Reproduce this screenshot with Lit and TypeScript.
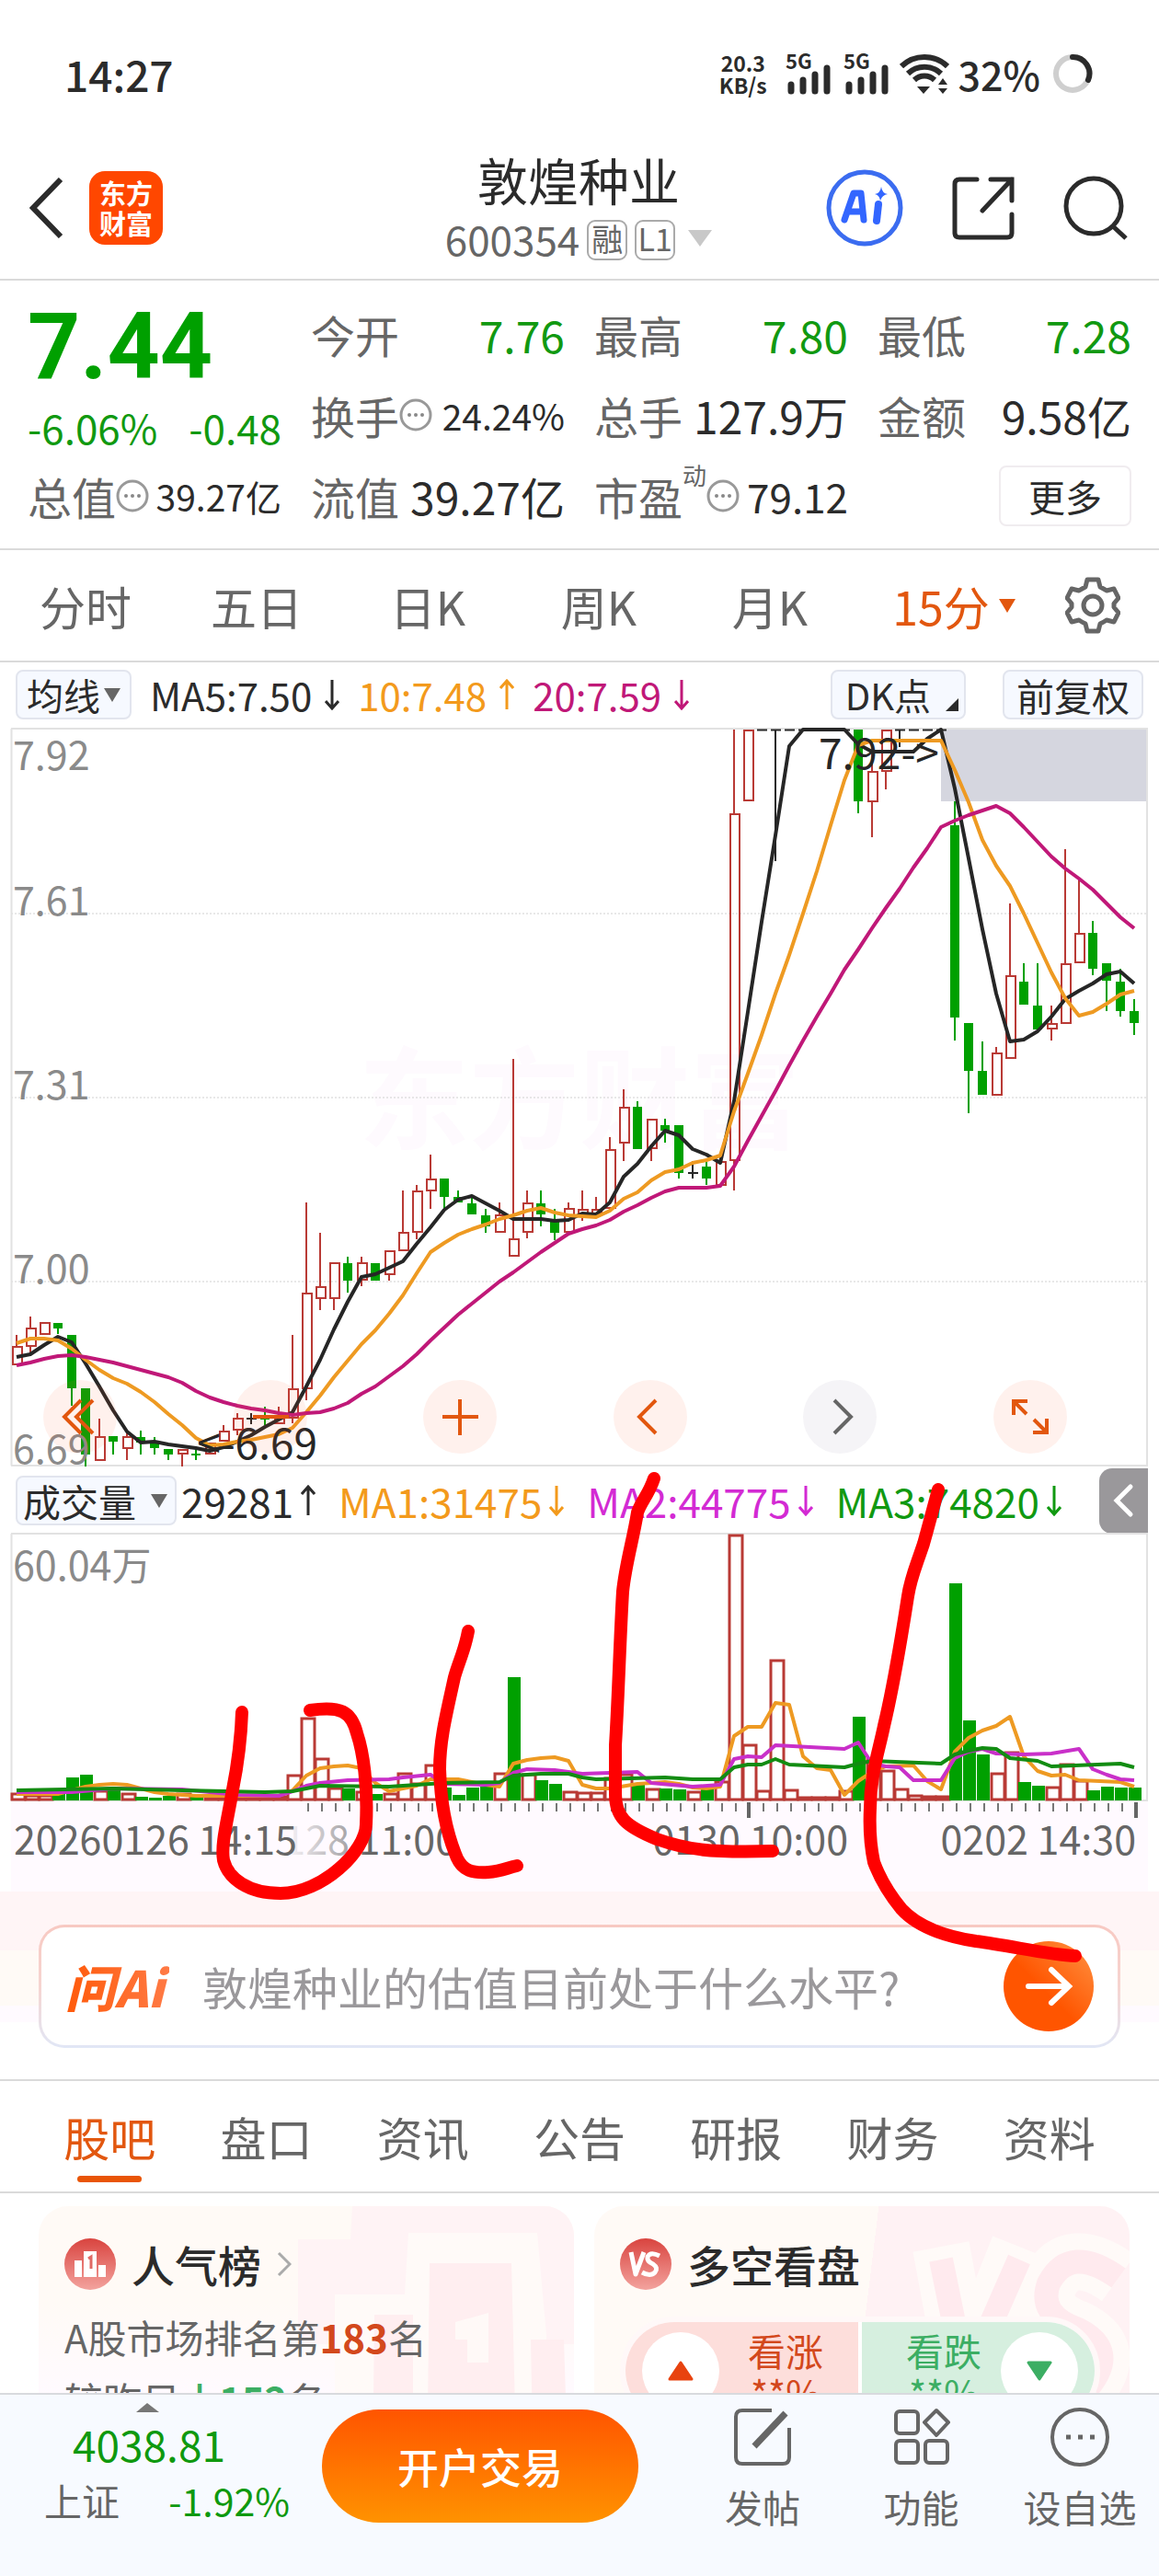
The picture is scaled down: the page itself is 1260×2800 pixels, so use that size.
import { LitElement, html, css, svg } from "lit";
import { customElement, property, state } from "lit/decorators.js";
import { classMap } from "lit/directives/class-map.js";

type Kind = "r" | "g" | "k";
/** high, body top, body bottom, low, kind */
type Candle = [number, number, number, number, Kind];
type Point = [number, number];

const X0 = 18;
const STEP = 15;
const cx = (i: number) => X0 + i * STEP;

const CANDLES: Candle[] = [
  [1451, 1463, 1484, 1484, "r"], [1431, 1443, 1464, 1470, "r"], [1437, 1437, 1451, 1451, "r"],
  [1438, 1438, 1444, 1450, "g"], [1451, 1451, 1509, 1528, "g"], [1509, 1509, 1581, 1594, "g"],
  [1542, 1561, 1588, 1588, "r"], [1561, 1561, 1567, 1581, "g"], [1556, 1561, 1575, 1587, "r"],
  [1555, 1562, 1568, 1581, "g"], [1562, 1568, 1574, 1581, "g"], [1575, 1575, 1581, 1587, "g"],
  [1575, 1575, 1581, 1594, "r"], [1573, 1580, 1582, 1587, "g"], [1568, 1568, 1581, 1581, "r"],
  [1549, 1555, 1567, 1567, "r"], [1536, 1541, 1555, 1560, "r"], [1536, 1541, 1543, 1548, "k"],
  [1529, 1539, 1543, 1549, "g"], [1529, 1540, 1548, 1548, "r"], [1451, 1509, 1542, 1547, "r"],
  [1307, 1405, 1510, 1522, "r"], [1340, 1398, 1412, 1424, "r"], [1372, 1372, 1412, 1424, "r"],
  [1366, 1373, 1392, 1405, "g"], [1366, 1372, 1392, 1398, "r"], [1373, 1373, 1392, 1392, "g"],
  [1359, 1359, 1386, 1392, "r"], [1294, 1339, 1360, 1360, "r"], [1288, 1294, 1340, 1347, "r"],
  [1255, 1281, 1295, 1314, "r"], [1281, 1281, 1301, 1314, "g"], [1294, 1301, 1307, 1307, "g"],
  [1302, 1308, 1320, 1320, "g"], [1314, 1321, 1333, 1340, "g"], [1307, 1320, 1340, 1340, "r"],
  [1151, 1346, 1366, 1366, "r"], [1294, 1307, 1340, 1346, "r"], [1294, 1308, 1320, 1333, "g"],
  [1314, 1327, 1340, 1348, "g"], [1307, 1313, 1340, 1340, "r"], [1294, 1314, 1320, 1327, "r"],
  [1301, 1314, 1320, 1320, "r"], [1236, 1249, 1314, 1314, "r"], [1184, 1203, 1243, 1262, "r"],
  [1197, 1203, 1249, 1249, "g"], [1216, 1216, 1249, 1262, "r"], [1216, 1223, 1229, 1242, "g"],
  [1223, 1223, 1275, 1281, "g"], [1262, 1274, 1276, 1281, "k"], [1262, 1268, 1281, 1288, "g"],
  [1262, 1262, 1289, 1289, "r"], [793, 884, 1262, 1294, "r"], [793, 793, 871, 871, "r"],
  [793, 793, 794, 794, "k"], [793, 793, 794, 936, "k"], [793, 793, 794, 794, "k"],
  [793, 793, 794, 794, "k"], [793, 793, 794, 794, "k"], [793, 793, 794, 794, "k"],
  [793, 793, 794, 794, "k"], [793, 793, 871, 884, "g"], [807, 838, 872, 910, "r"],
  [793, 793, 839, 858, "r"], [793, 793, 794, 812, "k"], [793, 793, 794, 794, "k"],
  [793, 793, 794, 794, "k"], [793, 793, 794, 794, "k"], [871, 897, 1106, 1131, "g"],
  [1112, 1112, 1164, 1210, "g"], [1132, 1164, 1190, 1190, "g"], [1138, 1144, 1191, 1191, "r"],
  [982, 1060, 1151, 1151, "r"], [1047, 1067, 1092, 1092, "g"], [1047, 1093, 1119, 1119, "g"],
  [1093, 1112, 1119, 1131, "r"], [923, 1047, 1113, 1113, "r"], [955, 1014, 1047, 1047, "r"],
  [1001, 1014, 1053, 1060, "g"], [1047, 1047, 1066, 1099, "g"], [1053, 1067, 1099, 1105, "g"],
  [1086, 1099, 1112, 1125, "g"],
];

const MA5 = [
  1475, 1472, 1462, 1453, 1459, 1482, 1507, 1533, 1556, 1568, 1567, 1570, 1572, 1574, 1577, 1573, 1567, 1560,
  1551, 1543, 1535, 1507, 1478, 1445, 1415, 1388, 1385, 1378, 1371, 1352, 1334, 1315, 1304, 1300, 1308, 1316,
  1325, 1325, 1325, 1327, 1326, 1319, 1320, 1307, 1279, 1265, 1246, 1229, 1234, 1249, 1255, 1264, 1197, 1100,
  1002, 908, 811, 793, 793, 793, 793, 809, 817, 817, 817, 817, 803, 793, 857, 933, 1010, 1080,
  1132, 1130, 1121, 1105, 1086, 1077, 1069, 1059, 1056, 1069,
];
const MA10 = [
  1460, 1455, 1455, 1457, 1466, 1478, 1489, 1498, 1504, 1513, 1524, 1537, 1549, 1563, 1571, 1570, 1567, 1565,
  1562, 1559, 1552, 1535, 1517, 1497, 1479, 1461, 1446, 1428, 1408, 1384, 1361, 1351, 1342, 1336, 1331, 1325,
  1321, 1316, 1313, 1318, 1321, 1322, 1323, 1316, 1303, 1296, 1283, 1274, 1271, 1264, 1261, 1256, 1208, 1167,
  1125, 1080, 1038, 993, 947, 897, 848, 810, 805, 805, 805, 805, 805, 805, 837, 872, 913, 941,
  963, 993, 1025, 1057, 1085, 1104, 1100, 1091, 1081, 1077,
];
const MA20 = [
  1484, 1481, 1477, 1474, 1473, 1475, 1478, 1481, 1485, 1489, 1493, 1497, 1503, 1512, 1519, 1524, 1528, 1531,
  1533, 1536, 1538, 1536, 1535, 1531, 1525, 1515, 1507, 1496, 1485, 1472, 1457, 1443, 1429, 1417, 1405, 1393,
  1383, 1372, 1361, 1351, 1341, 1336, 1332, 1326, 1317, 1310, 1302, 1295, 1291, 1291, 1291, 1289, 1268, 1240,
  1213, 1186, 1158, 1131, 1105, 1080, 1054, 1032, 1009, 987, 966, 943, 922, 899, 892, 886, 881, 876,
  884, 899, 915, 931, 944, 955, 967, 982, 997, 1009,
];

const VOLUME =
  "r1949 r1951 r1951 g1950 g1932 g1929 r1946 g1946 r1949 g1953 g1954 g1952 r1949 g1951 r1953 r1953 r1953 r1952 " +
  "r1953 r1952 r1929 r1867 r1911 r1943 g1944 r1947 g1950 r1949 r1927 r1938 r1918 g1943 g1951 g1943 g1942 r1927 " +
  "g1823 r1928 g1935 g1939 r1947 r1948 r1948 r1932 r1928 g1940 r1944 g1944 g1945 r1947 g1941 r1936 r1668 r1896 " +
  "r1946 r1804 r1945 r1953 r1953 r1953 r1946 g1866 r1911 r1924 r1944 r1951 r1952 r1952 g1721 g1870 g1907 r1927 " +
  "r1904 g1937 g1941 r1942 r1917 r1935 g1946 g1942 g1943 g1943";

const VMA1: Point[] = [
  [0, 1950], [3, 1950], [4, 1946], [5, 1942], [6, 1940], [7, 1939], [8, 1940], [9, 1944], [10, 1948], [11, 1950],
  [13, 1952], [19, 1952], [20, 1946], [21, 1930], [22, 1922], [23, 1920], [24, 1919], [25, 1922], [26, 1938],
  [27, 1947], [28, 1944], [29, 1941], [30, 1934], [32, 1934], [33, 1937], [34, 1940], [35, 1942], [36, 1917],
  [37, 1913], [38, 1911], [39, 1910], [40, 1914], [41, 1940], [42, 1944], [43, 1944], [45, 1939], [47, 1937],
  [48, 1939], [49, 1943], [50, 1944], [51, 1942], [52, 1887], [53, 1877], [54, 1877], [55, 1851], [56, 1853],
  [57, 1909], [58, 1922], [59, 1924], [60, 1951], [61, 1936], [62, 1926], [63, 1920], [65, 1919], [66, 1936],
  [67, 1945], [68, 1904], [69, 1889], [70, 1881], [71, 1876], [72, 1866], [73, 1909], [74, 1925], [75, 1930],
  [76, 1929], [77, 1935], [80, 1937], [81, 1942],
];
const VMA2: Point[] = [
  [0, 1948], [4, 1948], [7, 1944], [12, 1945], [14, 1948], [16, 1951], [19, 1952], [20, 1947], [21, 1941],
  [22, 1938], [24, 1935], [27, 1934], [28, 1932], [30, 1929], [31, 1939], [34, 1940], [35, 1938], [36, 1927],
  [37, 1923], [39, 1924], [41, 1928], [45, 1926], [46, 1938], [49, 1942], [51, 1940], [52, 1912], [53, 1909],
  [54, 1910], [55, 1897], [60, 1901], [61, 1894], [62, 1917], [63, 1920], [64, 1921], [65, 1935], [67, 1935],
  [68, 1911], [69, 1904], [70, 1901], [71, 1906], [73, 1907], [75, 1906], [77, 1901], [78, 1923], [79, 1929],
  [80, 1934], [81, 1935],
];
const VMA3: Point[] = [
  [0, 1946], [7, 1944], [12, 1946], [18, 1948], [20, 1947], [22, 1941], [27, 1942], [31, 1938], [35, 1937],
  [36, 1930], [38, 1928], [40, 1928], [41, 1932], [42, 1934], [47, 1932], [49, 1934], [51, 1934], [52, 1921],
  [53, 1918], [54, 1918], [55, 1912], [56, 1918], [60, 1921], [61, 1917], [62, 1914], [67, 1917], [68, 1907],
  [69, 1903], [70, 1900], [71, 1901], [72, 1911], [74, 1914], [75, 1920], [80, 1917], [81, 1921],
];

const line = (ys: number[]) => ys.map((y, i) => `${cx(i)},${y}`).join(" ");
const sparse = (ps: Point[]) => ps.map(([i, y]) => `${cx(i)},${y}`).join(" ");

const FONT = css`"Noto Sans CJK SC", "Noto Sans", sans-serif`;

const base = css`
  :host {
    display: block;
    font-family: ${FONT};
    color: #2b2b2b;
  }
  * {
    box-sizing: border-box;
  }
  svg {
    display: block;
    flex: none;
  }
  button,
  input {
    font: inherit;
    color: inherit;
    background: none;
    border: 0;
    padding: 0;
    margin: 0;
  }
  button {
    cursor: pointer;
  }
`;

@customElement("price-chart")
export class PriceChart extends LitElement {
  static styles = [
    base,
    css`
      :host {
        position: relative;
      }
      .plot {
        width: 100%;
        height: auto;
      }
      .axis {
        fill: #8a8a8a;
        font-size: 43px;
      }
      .mark {
        fill: #262626;
        font-size: 46px;
      }
      .watermark {
        fill: #fefafe;
        font-size: 120px;
        font-weight: 700;
      }
      .tools {
        position: absolute;
        left: 0;
        right: 0;
        bottom: 16px;
        padding: 0 100px 0 47px;
        display: flex;
        justify-content: space-between;
      }
      .tool {
        width: 80px;
        height: 80px;
        border-radius: 50%;
        background: rgba(255, 100, 50, 0.09);
      }
      .tool.off {
        background: rgba(90, 60, 120, 0.06);
      }
      .tool svg {
        fill: none;
        stroke: #e2570f;
        stroke-width: 4;
      }
      .tool.off svg {
        stroke: #666;
      }
    `,
  ];

  private candle([hi, top, bottom, lo, kind]: Candle, i: number) {
    const x = cx(i);
    if (kind === "k") {
      return svg`<path d="M${x} ${hi}V${lo}M${x - 5} ${(top + bottom) / 2}h11" stroke="#262626" stroke-width="2"/>`;
    }
    if (kind === "g") {
      return svg`<path d="M${x} ${hi}V${lo}" stroke="#00a000" stroke-width="2"/>
        <rect x=${x - 5} y=${top} width="10" height=${bottom - top} fill="#00a000"/>`;
    }
    return svg`<path d="M${x} ${hi}V${top}M${x} ${bottom}V${lo}" stroke="#b93a35" stroke-width="2"/>
      <rect x=${x - 4} y=${top + 1} width="10" height=${Math.max(bottom - top - 2, 2)} fill="none" stroke="#b93a35" stroke-width="2"/>`;
  }

  render() {
    return html`
      <svg class="plot" viewBox="0 790 1260 806" role="img" aria-label="15分K线">
        <text class="watermark" x="390" y="1240">东方财富</text>
        <rect x="1023" y="793" width="224" height="78" fill="#d5d6df" />
        <path d="M12 993H1247M12 1193H1247M12 1393H1247" stroke="#d0d0d0" stroke-width="1" stroke-dasharray="2 2" />
        <path d="M12.500 792V1593M12 792H1248M12 1593H1248M1247 792V1593" fill="none" stroke="#e2e2e2" stroke-width="2" />
        ${[["7.92", 837], ["7.61", 995], ["7.31", 1195], ["7.00", 1395]].map(
          ([t, y]) => svg`<text class="axis" x="14" y=${y}>${t}</text>`
        )}
        ${CANDLES.map((c, i) => this.candle(c, i))}
        <g fill="none" stroke-width="4" stroke-linejoin="round">
          <polyline points=${line(MA5)} stroke="#262626" />
          <polyline points=${line(MA10)} stroke="#ee9a22" />
          <polyline points=${line(MA20)} stroke="#c01878" />
        </g>
        <text class="axis" x="14" y="1591">6.69</text>
        <text class="mark" x="890" y="836">7.92-&gt;</text>
        <text class="mark" x="345" y="1586" text-anchor="end">&lt;-6.69</text>
      </svg>
      <div class="tools">
        <button class="tool" aria-label="最左">
          <svg viewBox="0 0 80 80"><path d="M41 22L23 40L41 58M54 22L36 40L54 58" /></svg>
        </button>
        <button class="tool" aria-label="缩小">
          <svg viewBox="0 0 80 80"><path d="M21 40H60" /></svg>
        </button>
        <button class="tool" aria-label="放大">
          <svg viewBox="0 0 80 80"><path d="M21 40H60M40 21V60" /></svg>
        </button>
        <button class="tool" aria-label="左移">
          <svg viewBox="0 0 80 80"><path d="M46 22L28 40L46 58" /></svg>
        </button>
        <button class="tool off" aria-label="右移">
          <svg viewBox="0 0 80 80"><path d="M34 22L52 40L34 58" /></svg>
        </button>
        <button class="tool" aria-label="全屏">
          <svg viewBox="0 0 80 80">
            <path d="M22 38V23H37M23 24L36 37M58 42V57H43M57 56L44 43" />
          </svg>
        </button>
      </div>
    `;
  }
}

@customElement("volume-chart")
export class VolumeChart extends LitElement {
  static styles = [
    base,
    css`
      .plot {
        width: 100%;
        height: auto;
      }
      .axis {
        fill: #8a8a8a;
        font-size: 43px;
      }
      .date {
        fill: #666;
        font-size: 43px;
      }
      .faded {
        fill: url(#fade);
      }
    `,
  ];

  render() {
    const ticks = Array.from({ length: 60 }, (_, i) => 335 + i * 15).filter((x) => x !== 815 && x < 1230);
    return html`
      <svg class="plot" viewBox="0 1666 1260 390" role="img" aria-label="成交量">
        <defs>
          <linearGradient id="fade" gradientUnits="userSpaceOnUse" x1="316" x2="398" y1="0" y2="0">
            <stop offset="0" stop-color="#666" stop-opacity="0" />
            <stop offset="0.04" stop-color="#666" stop-opacity="0.1" />
            <stop offset="0.8" stop-color="#666" stop-opacity="0.6" />
            <stop offset="1" stop-color="#666" />
          </linearGradient>
        </defs>
        <rect x="12" y="1958" width="1236" height="98" fill="#fffaff" />
        <path d="M12 1667H1248M12 1957H1248M12.500 1667V1957M1247 1667V1957" stroke="#e2e2e2" stroke-width="2" />
        <text class="axis" x="14" y="1718">60.04万</text>
        ${VOLUME.split(" ").map((v, i) => {
          const y = Number(v.slice(1));
          const x = cx(i) - 6;
          return v[0] === "g"
            ? svg`<rect x=${x} y=${y} width="14" height=${1957 - y} fill="#00a000"/>`
            : svg`<rect x=${x + 1} y=${y + 1} width="14" height=${1955 - y} fill="#fff" stroke="#b93a35" stroke-width="3"/>`;
        })}
        <g fill="none" stroke-width="4" stroke-linejoin="round">
          <polyline points=${sparse(VMA1)} stroke="#ee9a22" />
          <polyline points=${sparse(VMA2)} stroke="#c930c9" />
          <polyline points=${sparse(VMA3)} stroke="#128c12" />
        </g>
        <path d=${ticks.map((x) => `M${x} 1960v9`).join("")} stroke="#777" stroke-width="2" />
        <path d="M814 1959V1976M1235 1959V1976" stroke="#666" stroke-width="4" />
        <text class="date" x="15" y="2016">20260126 14:15</text>
        <text class="date faded" x="497" y="2016" text-anchor="end">0128 11:00</text>
        <text class="date" x="922" y="2016" text-anchor="end">0130 10:00</text>
        <text class="date" x="1235" y="2016" text-anchor="end">0202 14:30</text>
      </svg>
    `;
  }
}

const arrow = (dir: "up" | "down") => html`
  <svg class="arrow" width="16" height="34" viewBox="0 0 16 34" fill="none" stroke="currentColor" stroke-width="3">
    <path d=${dir === "down" ? "M8 1V32M1 24L8 32L15 24" : "M8 33V2M1 10L8 2L15 10"} />
  </svg>
`;

const dots = () => html`
  <svg class="dots" width="36" height="36" viewBox="0 0 36 36" aria-hidden="true">
    <circle cx="18" cy="18" r="16" fill="none" stroke="#999" stroke-width="3" />
    <circle cx="11" cy="18" r="2" fill="#888" /><circle cx="18" cy="18" r="2" fill="#888" />
    <circle cx="25" cy="18" r="2" fill="#888" />
  </svg>
`;

@customElement("app-root")
export class AppRoot extends LitElement {
  @property() name = "敦煌种业";
  @state() private period = "15分";
  @state() private section = "股吧";

  static styles = [
    base,
    css`
      .page {
        height: 100vh;
        display: flex;
        flex-direction: column;
        background: #fff;
        overflow: hidden;
      }
      .page > * {
        flex: none;
      }

      .status {
        height: 140px;
        padding: 20px 71px 0 70px;
        display: flex;
        align-items: center;
        font-size: 46px;
        font-weight: 500;
      }
      .clock {
        margin-right: auto;
      }
      .rate {
        font-size: 23px;
        line-height: 24px;
        font-weight: 700;
        text-align: center;
        margin-right: 18px;
      }
      .radio {
        font-size: 22px;
        font-weight: 700;
      }
      .battery {
        font-size: 43px;
        margin: 0 12px 0 10px;
      }

      .header {
        height: 165px;
        padding: 9px 34px 0 32px;
        display: grid;
        grid-template-columns: 1fr auto 1fr;
        align-items: center;
        border-bottom: 2px solid #dadada;
      }
      .left,
      .right {
        display: flex;
        align-items: center;
        gap: 28px;
      }
      .right {
        justify-content: flex-end;
        gap: 53px;
      }
      .logo {
        width: 80px;
        height: 80px;
        border-radius: 17px;
        background: #ff4700;
        color: #fff;
        font-size: 29px;
        line-height: 33px;
        font-weight: 700;
        display: grid;
        place-content: center;
        text-align: center;
        text-decoration: none;
      }
      .name {
        margin: 0;
        font-size: 55px;
        line-height: 66px;
        font-weight: 400;
        text-align: center;
      }
      .code {
        display: flex;
        align-items: center;
        justify-content: center;
        gap: 8px;
        height: 64px;
        font-size: 44px;
        line-height: 54px;
        color: #666;
      }
      .tag {
        width: 44px;
        height: 44px;
        border: 2px solid #aaa;
        border-radius: 9px;
        font-size: 34px;
        line-height: 36px;
        text-align: center;
        margin-top: 4px;
      }
      .code svg {
        margin-left: 6px;
      }

      .quote {
        display: grid;
        grid-template-columns: repeat(4, 1fr);
        grid-template-rows: repeat(3, 88px);
        column-gap: 32px;
        padding: 14px 30px 13px;
        border-bottom: 2px solid #dadada;
      }
      .headline {
        grid-row: span 2;
        color: #00a000;
      }
      .price {
        font-family: Roboto, "Noto Sans", sans-serif;
        font-size: 100px;
        line-height: 116px;
        font-weight: 700;
      }
      .change {
        display: flex;
        justify-content: space-between;
        font-size: 44px;
        line-height: 58px;
        color: #119911;
      }
      .item {
        display: flex;
        align-items: center;
        font-size: 48px;
        line-height: 80px;
        white-space: nowrap;
      }
      .item .label {
        color: #666;
      }
      .item .value {
        margin-left: auto;
      }
      .item .green {
        color: #119911;
      }
      .item .small {
        font-size: 39px;
      }
      .item .medium {
        font-size: 44px;
      }
      .sup {
        font-size: 26px;
        line-height: 30px;
        color: #666;
        align-self: flex-start;
        margin-top: 6px;
      }
      .more {
        justify-self: end;
        align-self: center;
        width: 144px;
        height: 66px;
        border: 2px solid #f0ecef;
        border-radius: 8px;
        font-size: 40px;
        line-height: 58px;
      }

      .periods {
        display: grid;
        grid-template-columns: repeat(5, 186fr) 214fr 88fr 28fr;
        height: 122px;
        align-items: center;
        border-bottom: 2px solid #dadada;
        font-size: 50px;
        line-height: 80px;
        color: #666;
      }
      .period {
        display: flex;
        align-items: center;
        justify-content: center;
        gap: 10px;
      }
      .on {
        color: #e2570f;
      }
      .gear {
        display: grid;
        place-items: center;
      }

      .board {
        position: relative;
      }
      .ink {
        position: absolute;
        inset: 0 0 auto 0;
        width: 100%;
        height: auto;
        pointer-events: none;
      }
      .legend {
        display: flex;
        align-items: center;
        height: 70px;
        padding: 0 17px;
        font-size: 42px;
        line-height: 60px;
        gap: 20px;
        white-space: nowrap;
      }
      .legend.volume {
        font-size: 44px;
        gap: 25px;
        padding-right: 12px;
      }
      .series {
        display: flex;
        align-items: center;
        gap: 14px;
      }
      .volume .series {
        gap: 8px;
      }
      .volume .chip + .series {
        margin-left: -20px;
      }
      .ma10 {
        color: #f39a1c;
      }
      .ma20 {
        color: #c01878;
      }
      .purple {
        color: #d32ad3;
      }
      .green {
        color: #119911;
      }
      .chip {
        position: relative;
        height: 54px;
        padding: 0 10px;
        border: 2px solid #e2e5ee;
        border-radius: 8px;
        background: #f6f9ff;
        font-size: 40px;
        line-height: 48px;
        display: flex;
        align-items: center;
        gap: 4px;
      }
      .chip.wide {
        font-size: 41px;
        padding: 0 8px 0 6px;
        gap: 16px;
      }
      .chip.push {
        margin-left: auto;
        padding: 0 32px 0 14px;
      }
      .chip.gap {
        font-size: 41px;
        padding: 0 13px;
        margin-left: 20px;
      }
      .corner {
        position: absolute;
        right: 6px;
        bottom: 7px;
      }
      .collapse {
        margin-left: auto;
        width: 53px;
        height: 71px;
        background: #9a989b;
        border-radius: 14px 0 0 14px;
        display: grid;
        place-items: center;
      }

      .ask {
        padding: 36px 42px 34px;
        border-bottom: 2px solid #dadada;
        background: linear-gradient(#fff5f6 0 64px, #fffaf6 64px 124px, #fffaff 124px 142px, #fff 142px);
      }
      .askbox {
        height: 134px;
        border: 3px solid transparent;
        border-radius: 28px;
        background: linear-gradient(#fff, #fff) padding-box, linear-gradient(#f8c9c2, #f6d4d0 50%, #e1e7f6) border-box;
        display: flex;
        align-items: center;
        padding: 0 26px;
        gap: 36px;
      }
      .brand {
        font-size: 54px;
        font-style: italic;
        font-weight: 900;
        line-height: 80px;
        background: linear-gradient(90deg, #ff5a0a, #ff7a45);
        background-clip: text;
        -webkit-background-clip: text;
        color: transparent;
        padding-right: 6px;
      }
      .question {
        flex: 1;
        min-width: 0;
        font-size: 49px;
        line-height: 80px;
        height: 80px;
        outline: 0;
      }
      .question::placeholder {
        color: #9a989b;
        opacity: 1;
      }
      .send {
        width: 98px;
        height: 98px;
        border-radius: 50%;
        background: linear-gradient(45deg, #ff5500 45%, #ff9444);
      }

      .sections {
        display: grid;
        grid-template-columns: repeat(7, 1fr);
        padding: 0 34px;
        height: 122px;
        border-bottom: 2px solid #dadada;
        font-size: 50px;
        line-height: 80px;
        color: #666;
      }
      .section {
        position: relative;
      }
      .section.on {
        color: #e2570f;
      }
      .section.on::after {
        content: "";
        position: absolute;
        left: 50%;
        bottom: 10px;
        width: 70px;
        height: 7px;
        margin-left: -35px;
        border-radius: 4px;
        background: #e95506;
      }

      .page > .cards {
        flex: 1 1 0;
        min-height: 0;
        overflow: hidden;
        display: grid;
        grid-template-columns: 1fr 1fr;
        gap: 22px;
        padding: 14px 32px 0 42px;
      }
      .card {
        position: relative;
        height: 300px;
        border-radius: 32px;
        padding: 26px 28px;
        overflow: hidden;
        background: linear-gradient(#fffaf6 35%, #fffaff 70%);
      }
      .card.versus {
        background: linear-gradient(97deg, #fffaf6 50%, #fff2f4 50%);
      }
      .ghost {
        position: absolute;
        right: 0;
        top: 0;
      }
      .title {
        position: relative;
        margin: 0;
        height: 74px;
        display: flex;
        align-items: center;
        gap: 17px;
        font-size: 47px;
        line-height: 60px;
        font-weight: 500;
      }
      .rank {
        position: relative;
        margin: 0;
        font-size: 42px;
        line-height: 68px;
        color: #666;
      }
      .ranks {
        padding-top: 8px;
      }
      .up {
        color: #d3481c;
        font-weight: 700;
      }
      .down {
        color: #3cae63;
        font-weight: 700;
      }
      .vote {
        position: relative;
        margin: 20px 4px 0 0;
        height: 118px;
        border: 6px solid #fff8f8;
        border-radius: 60px;
        display: grid;
        grid-template-columns: 1fr 1fr;
        gap: 4px;
        overflow: hidden;
        background: #fff;
      }
      .side {
        display: flex;
        align-items: center;
        justify-content: space-between;
        padding: 0 38px 0 18px;
        background: #fddedb;
        color: #d3481c;
        font-size: 41px;
        line-height: 46px;
        text-align: center;
      }
      .side.fall {
        background: #d6efdf;
        color: #3cae63;
        padding: 0 18px 0 48px;
      }
      .knob {
        width: 84px;
        height: 84px;
        border-radius: 50%;
        background: #fff;
        display: grid;
        place-items: center;
      }

      .bar {
        height: 199px;
        border-top: 2px solid #d8dade;
        background: #f7faff;
        display: flex;
        padding: 0 24px 0 48px;
      }
      .index {
        width: 267px;
        display: grid;
        grid-template-columns: auto auto;
        justify-content: space-between;
        align-content: start;
        padding-top: 9px;
        color: #0f990f;
        text-align: left;
      }
      .index svg {
        grid-column: 1 / -1;
        justify-self: center;
        margin-left: -42px;
      }
      .index .points {
        grid-column: 1 / -1;
        padding-left: 31px;
        font-size: 46px;
        line-height: 68px;
      }
      .index .caption {
        color: #666;
        font-size: 41px;
        line-height: 54px;
      }
      .index .pct {
        font-size: 41px;
        line-height: 54px;
      }
      .open {
        width: 344px;
        height: 123px;
        margin: 16px 0 0 35px;
        border-radius: 62px;
        background: linear-gradient(#ff5500, #ff9200);
        color: #fff;
        font-size: 45px;
        font-weight: 500;
        line-height: 110px;
      }
      .actions {
        flex: 1;
        display: flex;
        justify-content: space-between;
        padding: 14px 0 0 73px;
      }
      .action {
        width: 124px;
        display: flex;
        flex-direction: column;
        align-items: center;
        align-self: flex-start;
        gap: 16px;
        font-size: 41px;
        line-height: 54px;
        color: #666;
      }
      .action svg {
        fill: none;
        stroke: #666;
        stroke-width: 4;
      }
    `,
  ];

  private bars() {
    return html`
      <svg width="63" height="48" viewBox="0 0 63 48" aria-hidden="true">
        <text class="radio" x="2" y="19" fill="#2b2b2b">5G</text>
        <path d="M8 36V43M21 31V43M34 25V43M47 18V43" stroke="#2b2b2b" stroke-width="7" stroke-linecap="round" />
      </svg>
    `;
  }

  private renderStatus() {
    return html`
      <div class="status">
        <span class="clock">14:27</span>
        <span class="rate">20.3<br />KB/s</span>
        ${this.bars()}${this.bars()}
        <svg width="54" height="48" viewBox="0 0 54 48" fill="none" stroke="#2b2b2b" stroke-width="6" aria-hidden="true">
          <path d="M2 16A36 36 0 0 1 52 16M9 24A26 26 0 0 1 45 24M16 31A16 16 0 0 1 38 31" />
          <path d="M19 38H33L26 46ZM42 40L47 46L52 40ZM42 36L47 29L52 36Z" fill="#2b2b2b" stroke="none" />
        </svg>
        <span class="battery">32%</span>
        <svg width="46" height="46" viewBox="0 0 46 46" fill="none" stroke-width="6" aria-hidden="true">
          <circle cx="23" cy="23" r="18" stroke="#cfcfcf" />
          <path d="M23 5A18 18 0 0 1 40 30" stroke="#2b2b2b" stroke-linecap="round" />
        </svg>
      </div>
    `;
  }

  private renderHeader() {
    return html`
      <header class="header">
        <div class="left">
          <button aria-label="返回">
            <svg width="37" height="66" viewBox="0 0 37 66" fill="none" stroke="#2b2b2b" stroke-width="6">
              <path d="M34 2L4 33L34 64" />
            </svg>
          </button>
          <a class="logo" href="#home"><span>东方</span><span>财富</span></a>
        </div>
        <div>
          <h1 class="name">${this.name}</h1>
          <div class="code">
            600354<span class="tag">融</span><span class="tag">L1</span>
            <svg width="26" height="18" viewBox="0 0 26 18" fill="#c8c8c8"><path d="M0 0H26L13 18Z" /></svg>
          </div>
        </div>
        <div class="right">
          <button aria-label="AI">
            <svg width="84" height="84" viewBox="0 0 84 84" fill="none">
              <circle cx="42" cy="42" r="39" stroke="#3b6cf0" stroke-width="5" />
              <path d="M20 55L30 26H38L41 55M24 46H38" stroke="#3366ff" stroke-width="7" stroke-linejoin="round" stroke-linecap="round" />
              <path d="M57 38L55 56" stroke="#3366ff" stroke-width="8" stroke-linecap="round" />
              <path d="M60 19Q61 26 67 27Q61 28 59 34Q58 28 53 27Q59 26 60 19Z" fill="#3366ff" />
            </svg>
          </button>
          <button aria-label="分享">
            <svg width="68" height="70" viewBox="0 0 68 70" fill="none" stroke="#2b2b2b" stroke-width="5">
              <path d="M27 4H8Q3 4 3 9V62Q3 67 8 67H60Q65 67 65 62V42M42 4H65V27M65 4L33 38" stroke-linecap="round" />
            </svg>
          </button>
          <button aria-label="搜索">
            <svg width="70" height="70" viewBox="0 0 70 70" fill="none" stroke="#2b2b2b" stroke-width="5">
              <circle cx="33" cy="33" r="30" /><path d="M54 55L68 68" />
            </svg>
          </button>
        </div>
      </header>
    `;
  }

  private item(label: string, value: string, cls = "", icon = false, sup = "") {
    return html`
      <div class="item">
        <span class="label">${label}</span>${sup ? html`<span class="sup">${sup}</span>` : ""}${icon ? dots() : ""}
        <span class="value ${cls}">${value}</span>
      </div>
    `;
  }

  private renderQuote() {
    return html`
      <section class="quote">
        <div class="headline">
          <div class="price">7.44</div>
          <div class="change"><span>-6.06%</span><span>-0.48</span></div>
        </div>
        ${this.item("今开", "7.76", "green")} ${this.item("最高", "7.80", "green")}
        ${this.item("最低", "7.28", "green")} ${this.item("换手", "24.24%", "small", true)}
        ${this.item("总手", "127.9万")} ${this.item("金额", "9.58亿")}
        ${this.item("总值", "39.27亿", "small", true)} ${this.item("流值", "39.27亿")}
        ${this.item("市盈", "79.12", "medium", true, "动")}
        <button class="more">更多</button>
      </section>
    `;
  }

  private renderPeriods() {
    return html`
      <nav class="periods">
        ${["分时", "五日", "日K", "周K", "月K", "15分"].map(
          (p) => html`
            <button class=${classMap({ period: true, on: p === this.period })} @click=${() => (this.period = p)}>
              ${p}${p === "15分"
                ? html`<svg width="18" height="15" viewBox="0 0 18 15" fill="currentColor"><path d="M0 0H18L9 15Z" /></svg>`
                : ""}
            </button>
          `
        )}
        <button class="gear" aria-label="设置">
          <svg width="60" height="62" viewBox="0 0 60 62" fill="none" stroke="#666" stroke-width="5" stroke-linejoin="round">
            <path
              d="M24 3H36L38 11Q42 13 45 15L53 13L58 23L53 29V33L58 39L53 49L45 47Q42 49 38 51L36 59H24L22 51Q18 49 15 47L7 49L2 39L7 33V29L2 23L7 13L15 15Q18 13 22 11Z"
            />
            <circle cx="30" cy="31" r="10" />
          </svg>
        </button>
      </nav>
    `;
  }

  private renderBoard() {
    const tri = html`<svg width="18" height="15" viewBox="0 0 18 15" fill="#666"><path d="M0 0H18L9 15Z" /></svg>`;
    return html`
      <div class="board">
        <div class="legend">
          <button class="chip">均线${tri}</button>
          <span class="series">MA5:7.50${arrow("down")}</span>
          <span class="series ma10">10:7.48${arrow("up")}</span>
          <span class="series ma20">20:7.59${arrow("down")}</span>
          <button class="chip push">
            DK点<svg class="corner" width="14" height="14" viewBox="0 0 14 14"><path d="M14 0V14H0Z" fill="#2b2b2b" /></svg>
          </button>
          <button class="chip gap">前复权</button>
        </div>
        <price-chart></price-chart>
        <div class="legend volume">
          <button class="chip wide">成交量${tri}</button>
          <span class="series">29281${arrow("up")}</span>
          <span class="series ma10">MA1:31475${arrow("down")}</span>
          <span class="series purple">MA2:44775${arrow("down")}</span>
          <span class="series green">MA3:74820${arrow("down")}</span>
          <button class="collapse" aria-label="展开">
            <svg width="24" height="38" viewBox="0 0 24 38" fill="none" stroke="#fff" stroke-width="5" stroke-linecap="round">
              <path d="M19 4L4 19L19 34" />
            </svg>
          </button>
        </div>
        <volume-chart></volume-chart>
        <form class="ask" @submit=${(e: Event) => e.preventDefault()}>
          <div class="askbox">
            <label class="brand" for="question">问Ai</label>
            <input class="question" id="question" placeholder="敦煌种业的估值目前处于什么水平?" />
            <button class="send" aria-label="发送">
              <svg width="98" height="98" viewBox="0 0 98 98" fill="none" stroke="#fff" stroke-width="6" stroke-linecap="round">
                <path d="M27 49H70M52 31L71 49L52 67" />
              </svg>
            </button>
          </div>
        </form>
        <svg class="ink" viewBox="0 720 1260 1540" fill="none" stroke="#ff0000" stroke-width="14" stroke-linecap="round" stroke-linejoin="round" aria-hidden="true">
          <path d="M263 1861C262 1890 259 1915 253 1945C247 1980 240 2005 243 2022C248 2042 270 2058 305 2058C350 2058 398 2012 398 1983C400 1940 395 1905 388 1884C382 1860 370 1854 337 1859" />
          <path d="M509 1773C505 1795 499 1805 494 1823C486 1860 478 1890 478 1923C479 1960 485 1990 495 2015C502 2035 515 2036 531 2035C545 2034 552 2030 562 2028" />
          <path d="M711 1607C705 1625 697 1632 693 1644C688 1675 680 1700 677 1730C674 1780 672 1850 669 1897V1950C669 1975 680 1985 714 1999C745 2010 770 2014 840 2012" />
          <path d="M1020 1619C1013 1645 1009 1660 1004 1678C995 1705 990 1715 987 1735C980 1780 972 1830 961 1876C955 1905 946 1930 946 1965C945 1985 946 2005 950 2024C957 2043 966 2058 980 2075C1000 2097 1035 2106 1061 2110C1100 2115 1140 2125 1169 2126" />
        </svg>
      </div>
    `;
  }

  private renderCards() {
    return html`
      <section class="cards">
        <article class="card">
          <svg class="ghost" width="320" height="300" viewBox="0 0 320 300">
            <path d="M79 0H320V150H20V36H77Z" fill="#fff3f5" />
            <path d="M140 29H280L290 140V300H60V96H136Z" fill="#fffaf8" />
            <path d="M103 118H145V300H101ZM163 62H252L258 300H160ZM273 145H309L314 300H276Z" fill="#ffeef0" />
            <path d="M191 126L227 116V170H204V145H191Z" fill="#fff9f7" />
          </svg>
          <h2 class="title">
            <svg width="56" height="56" viewBox="0 0 56 56">
              <defs>
                <linearGradient id="badge1" x2="0" y2="1"><stop stop-color="#d9443f" /><stop offset="1" stop-color="#f3a39e" /></linearGradient>
              </defs>
              <circle cx="28" cy="28" r="28" fill="url(#badge1)" />
              <path d="M11 24H19V42H11ZM21 14H35V42H21ZM37 29H45V42H37Z" fill="#fff" />
              <path d="M26 22L29 20V33" fill="none" stroke="#e06a65" stroke-width="3" />
            </svg>
            人气榜
            <svg width="16" height="28" viewBox="0 0 16 28" fill="none" stroke="#aaa" stroke-width="3"><path d="M2 2L14 14L2 26" /></svg>
          </h2>
          <div class="ranks">
            <p class="rank">A股市场排名第<span class="up">183</span>名</p>
            <p class="rank">较昨日<span class="down">↓152</span>名</p>
          </div>
        </article>
        <article class="card versus">
          <svg class="ghost" width="270" height="300" viewBox="0 0 270 300" fill="none" aria-hidden="true">
            <path d="M65 44L92 190L150 44" stroke="#fffaf8" stroke-width="62" />
            <path d="M258 78Q205 40 182 84Q170 118 214 134Q258 156 226 196" stroke="#fffaf8" stroke-width="62" />
            <path d="M65 58L92 190L150 58" stroke="#ffeaee" stroke-width="26" />
            <path d="M258 78Q205 40 182 84Q170 118 214 134Q258 156 226 196" stroke="#ffeaee" stroke-width="26" />
          </svg>
          <h2 class="title">
            <svg width="56" height="56" viewBox="0 0 56 56">
              <defs>
                <linearGradient id="badge2" x2="0" y2="1"><stop stop-color="#d9443f" /><stop offset="1" stop-color="#f3a39e" /></linearGradient>
              </defs>
              <circle cx="28" cy="28" r="28" fill="url(#badge2)" />
              <path d="M12 15L17 39L26 15" fill="none" stroke="#fff" stroke-width="5" stroke-linejoin="round" />
              <path d="M43 19Q33 14 30 20Q29 25 36 28Q42 32 38 37Q33 42 24 37" fill="none" stroke="#fff" stroke-width="5" />
            </svg>
            多空看盘
          </h2>
          <div class="vote">
            <button class="side">
              <span class="knob"><svg width="28" height="22" viewBox="0 0 28 22"><path d="M14 2L26 20H2Z" fill="#e8430f" stroke="#e8430f" stroke-width="3" stroke-linejoin="round" /></svg></span>
              <span>看涨<br />**%</span>
            </button>
            <button class="side fall">
              <span>看跌<br />**%</span>
              <span class="knob"><svg width="28" height="22" viewBox="0 0 28 22"><path d="M14 20L26 2H2Z" fill="#3cae63" stroke="#3cae63" stroke-width="3" stroke-linejoin="round" /></svg></span>
            </button>
          </div>
        </article>
      </section>
    `;
  }

  private renderBar() {
    return html`
      <footer class="bar">
        <button class="index">
          <svg width="25" height="10" viewBox="0 0 25 10" fill="#777"><path d="M0 10H25L12 0Z" /></svg>
          <span class="points">4038.81</span>
          <span class="caption">上证</span>
          <span class="pct">-1.92%</span>
        </button>
        <button class="open">开户交易</button>
        <div class="actions">
          <button class="action">
            <svg width="64" height="64" viewBox="0 0 64 64">
              <path d="M42 3H10Q3 3 3 10V54Q3 61 10 61H54Q61 61 61 54V22" />
              <path d="M57 6L23 42" stroke-width="7" />
            </svg>
            发帖
          </button>
          <button class="action">
            <svg width="64" height="64" viewBox="0 0 64 64">
              <rect x="4" y="4" width="24" height="24" rx="4" /><rect x="4" y="36" width="24" height="24" rx="4" />
              <rect x="36" y="36" width="24" height="24" rx="4" /><path d="M48 3L61 16L48 30L35 16Z" stroke-linejoin="round" />
            </svg>
            功能
          </button>
          <button class="action">
            <svg width="66" height="64" viewBox="0 0 66 64">
              <circle cx="33" cy="32" r="30" />
              <path d="M18 32H23M31 32H36M44 32H49" stroke-width="5" />
            </svg>
            设自选
          </button>
        </div>
      </footer>
    `;
  }

  render() {
    return html`
      <div class="page">
        ${this.renderStatus()} ${this.renderHeader()} ${this.renderQuote()} ${this.renderPeriods()} ${this.renderBoard()}
        <nav class="sections">
          ${["股吧", "盘口", "资讯", "公告", "研报", "财务", "资料"].map(
            (s) => html`
              <button class=${classMap({ section: true, on: s === this.section })} @click=${() => (this.section = s)}>
                ${s}
              </button>
            `
          )}
        </nav>
        ${this.renderCards()} ${this.renderBar()}
      </div>
    `;
  }
}
